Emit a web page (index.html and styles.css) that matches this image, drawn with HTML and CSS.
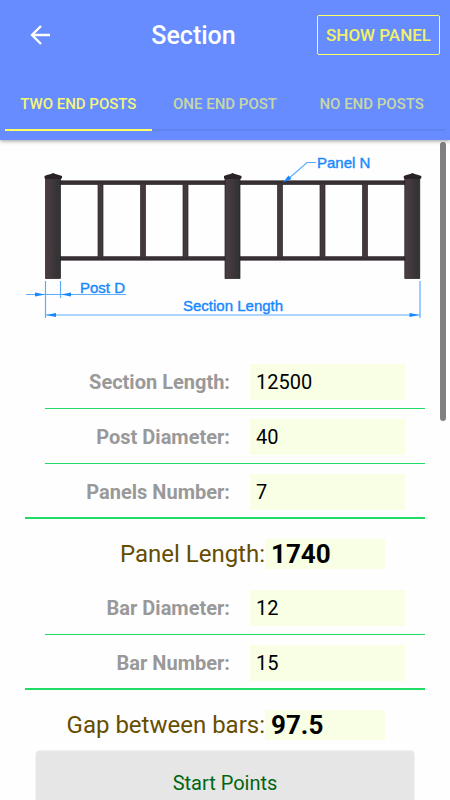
FILE: index.html
```html
<!DOCTYPE html>
<html lang="en">
<head>
    <meta charset="UTF-8">
    <meta name="viewport" content="width=device-width, initial-scale=1.0">
    <title>Section</title>
    <link rel="stylesheet" href="styles.css">
</head>
<body>
    <header class="header">
        <div class="toolbar">
            <button class="back-btn" aria-label="Back">
                <svg width="20" height="20" viewBox="0 0 20 20" fill="none" stroke="#fff" stroke-width="2.4">
                    <path d="M20 10H2M11 1L2 10L11 19"/>
                </svg>
            </button>
            <h1 class="title">Section</h1>
            <button class="panel-btn">SHOW PANEL</button>
        </div>
        <nav class="tabs">
            <button class="tab active">TWO END POSTS</button>
            <button class="tab">ONE END POST</button>
            <button class="tab">NO END POSTS</button>
        </nav>
    </header>

    <main class="content">
        <svg class="diagram" viewBox="0 0 400 180" role="img" aria-label="Fence section">
            <defs>
                <linearGradient id="post">
                    <stop offset="0" stop-color="#4b3c43"/>
                    <stop offset="0.35" stop-color="#443940"/>
                    <stop offset="0.75" stop-color="#353434"/>
                    <stop offset="1" stop-color="#353434"/>
                </linearGradient>
                <g id="fencePost">
                    <rect x="0.5" y="33" width="15" height="100.5" fill="url(#post)" stroke="#211d20" stroke-width="0.7"/>
                    <path d="M-0.5 31L2 30L6 29L8 28L10.5 29L14 30L17 31V33L16 34H0.5L-0.5 33Z" fill="#292226"/>
                </g>
                <g id="bar">
                    <rect y="39" width="5" height="73" fill="#43383e"/>
                    <path d="M0 39V112M5 39V112" stroke="#2b2529" stroke-width="0.7"/>
                </g>
            </defs>

            <!-- rails -->
            <g fill="#372f33" stroke="#151216" stroke-width="0.5">
                <rect x="35" y="35.8" width="345" height="3.8"/>
                <rect x="35" y="111.6" width="345" height="3.6"/>
            </g>

            <!-- bars and posts -->
            <use href="#bar" x="73"/>
            <use href="#bar" x="115.5"/>
            <use href="#bar" x="158"/>
            <use href="#bar" x="252.5"/>
            <use href="#bar" x="295"/>
            <use href="#bar" x="337.5"/>
            <use href="#fencePost" x="20"/>
            <use href="#fencePost" x="199.5"/>
            <use href="#fencePost" x="379.3"/>

            <!-- dimensions -->
            <g fill="none" stroke="#5cacff" stroke-width="1.2">
                <path d="M20.5 136V173M35.5 136V153M395 136V173"/>
                <path d="M1 149.5H20M20 149.5H101"/>
                <path d="M21 170H395"/>
                <path d="M262 35L282 17.5H291"/>
            </g>
            <g fill="#1689ff">
                <path d="M20 149.5L10 147.5V151.5Z"/>
                <path d="M36 149.5L46 147.5V151.5Z"/>
                <path d="M21 170L31 168V172Z"/>
                <path d="M394.5 170L384.5 168V172Z"/>
                <path d="M258 37.5L263.5 30.5L266.5 34Z"/>
            </g>
            <g class="dim-text">
                <text x="292" y="23">Panel N</text>
                <text x="55" y="148">Post D</text>
                <text x="158" y="166">Section Length</text>
            </g>
        </svg>

        <form class="form">
            <div class="row">
                <label for="sectionLength">Section Length:</label>
                <input id="sectionLength" type="text" inputmode="decimal" value="12500">
            </div>
            <div class="row">
                <label for="postDiameter">Post Diameter:</label>
                <input id="postDiameter" type="text" inputmode="decimal" value="40">
            </div>
            <div class="row last">
                <label for="panelsNumber">Panels Number:</label>
                <input id="panelsNumber" type="text" inputmode="decimal" value="7">
            </div>
            <div class="result">
                <label for="panelLength">Panel Length:</label>
                <input id="panelLength" type="text" value="1740" readonly>
            </div>
            <div class="row">
                <label for="barDiameter">Bar Diameter:</label>
                <input id="barDiameter" type="text" inputmode="decimal" value="12">
            </div>
            <div class="row last">
                <label for="barNumber">Bar Number:</label>
                <input id="barNumber" type="text" inputmode="decimal" value="15">
            </div>
            <div class="result">
                <label for="barGap">Gap between bars:</label>
                <input id="barGap" type="text" value="97.5" readonly>
            </div>
            <button type="button" class="start-btn">Start Points</button>
        </form>
        <div class="scroll-thumb"></div>
    </main>
</body>
</html>
```
FILE: styles.css
```css
* {
    box-sizing: border-box;
}
body {
    margin: 0;
    height: 100vh;
    display: flex;
    flex-direction: column;
    overflow: hidden;
    background: #fefefe;
    font-family: Roboto, sans-serif;
}
button {
    font-family: inherit;
    cursor: pointer;
}
.header {
    position: relative;
    z-index: 1;
    background: #668cff;
    box-shadow: 0 1px 4px rgba(0, 0, 0, 0.4);
}
.toolbar {
    display: flex;
    align-items: center;
    height: 70px;
    padding: 0 10px;
}
.back-btn {
    display: flex;
    padding: 20px;
    border: none;
    background: none;
}
.title {
    flex: 1;
    margin: 0;
    color: #fff;
    font-size: 25px;
    font-weight: 500;
    text-align: center;
}
.panel-btn {
    height: 40px;
    padding: 0 8px;
    border: 1px solid #ffff66;
    border-radius: 2px;
    background: none;
    color: #f2f266;
    font-size: 17px;
    font-weight: 500;
    white-space: nowrap;
}
.tabs {
    display: grid;
    grid-template-columns: repeat(3, 1fr);
    padding: 8px 5px 9px;
}
.tab {
    height: 53px;
    padding: 0;
    border: none;
    border-bottom: 2px solid #5f82ee;
    background: none;
    color: #c9d8a3;
    font-size: 15px;
    font-weight: 500;
}
.tab.active {
    border-color: #ffff66;
    color: #f4f677;
}
.content {
    position: relative;
    flex: 1;
    overflow: hidden;
    padding: 5px 25px 0;
}
.diagram {
    display: block;
    width: 100%;
    margin-bottom: 29px;
}
.dim-text {
    fill: #1689ff;
    stroke: #1689ff;
    stroke-width: 0.4;
    font-family: "Liberation Sans", Arial, sans-serif;
    font-size: 15px;
}
.row {
    display: flex;
    align-items: center;
    justify-content: flex-end;
    gap: 20px;
    height: 55px;
    margin-left: 20px;
    padding: 10px 20px 8px 0;
    border-bottom: 1px solid #1fdc65;
}
.row.last {
    margin-left: 0;
    padding-bottom: 7px;
    border-bottom: 2px solid #1fdc65;
}
.row label {
    color: #999;
    font-size: 20px;
    font-weight: 700;
}
.row input {
    width: 155px;
    height: 36px;
    padding: 0 6px;
    border: none;
    background: #f9ffe5;
    color: #000;
    font-family: inherit;
    font-size: 20px;
}
.result {
    display: flex;
    align-items: center;
    justify-content: flex-end;
    padding: 20px 40px 11px 0;
}
.result label {
    color: #664d00;
    font-size: 24px;
    line-height: 30px;
}
.result input {
    width: 120px;
    height: 30px;
    padding: 0 6px;
    border: none;
    background: #f9ffe5;
    color: #000;
    font-family: inherit;
    font-size: 26px;
    font-weight: 700;
}
.start-btn {
    display: block;
    width: calc(100% - 22px);
    height: 64px;
    margin: 0 auto;
    border: none;
    border-radius: 4px;
    background: #e6e6e6;
    box-shadow: 0 0 2px rgba(0, 0, 0, 0.15);
    color: #006611;
    font-size: 20px;
}
.scroll-thumb {
    position: absolute;
    top: 2px;
    right: 4px;
    width: 6px;
    height: 279px;
    border-radius: 3px;
    background: #808080;
}
```
